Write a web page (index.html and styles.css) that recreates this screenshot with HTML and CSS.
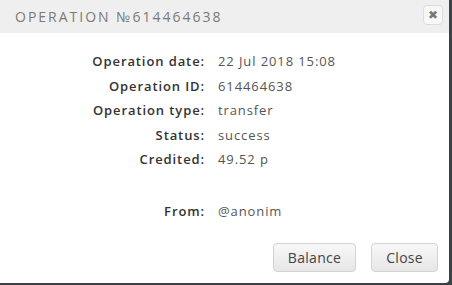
FILE: index.html
```html
<!DOCTYPE html>
<html lang="en">
<head>
    <meta charset="UTF-8">
    <title>Operation</title>
    <link rel="stylesheet" href="styles.css">
</head>
<body>
    <div class="modal">
        <div class="modal-header">
            <h3 class="modal-title">Operation №614464638</h3>
            <button class="close-x">&#10006;</button>
        </div>
        <div class="modal-body">
            <dl class="details">
                <dt>Operation date:</dt><dd>22 Jul 2018 15:08</dd>
                <dt>Operation ID:</dt><dd>614464638</dd>
                <dt>Operation type:</dt><dd>transfer</dd>
                <dt>Status:</dt><dd>success</dd>
                <dt>Credited:</dt><dd>49.52 р</dd>
                <dt class="gap">From:</dt><dd class="gap">@anonim</dd>
            </dl>
        </div>
        <div class="modal-footer">
            <button class="btn">Balance</button>
            <button class="btn">Close</button>
        </div>
    </div>
</body>
</html>
```

FILE: styles.css
```css
body {
    margin: 0;
    background: #3a4244;
    font-family: 'Open Sans', sans-serif;
}

.modal {
    width: 449px;
    height: 283px;
    background: #fff;
    border-bottom-right-radius: 4px;
    display: flex;
    flex-direction: column;
}

.modal-header {
    height: 33px;
    background: #efefef;
    display: flex;
    align-items: center;
    justify-content: space-between;
    padding: 0 6px 0 15px;
}

.modal-title {
    margin: 0;
    font-size: 14px;
    font-weight: normal;
    text-transform: uppercase;
    letter-spacing: 2px;
    color: #7a7a7a;
}

.close-x {
    width: 20px;
    height: 20px;
    padding: 0;
    border: 1px solid #dcdcdc;
    border-radius: 4px;
    background: #f7f7f7;
    color: #777;
    font-family: 'DejaVu Sans', sans-serif;
    font-size: 12px;
    line-height: 18px;
    margin-top: -3px;
}

.modal-body {
    flex: 1;
    padding-top: 16px;
}

.details {
    margin: 0;
    display: grid;
    grid-template-columns: 204px 1fr;
    column-gap: 14px;
    font-size: 13px;
    line-height: 24.6px;
    letter-spacing: 0.9px;
}

.details dt {
    text-align: right;
    font-weight: 600;
    color: #333;
    margin-right: -1px;
}

.details dd {
    margin: 0;
    color: #555;
}

.details .gap {
    margin-top: 27px;
}

.modal-footer {
    display: flex;
    justify-content: flex-end;
    gap: 15px;
    padding: 0 11px 11px 0;
}

.btn {
    height: 29px;
    padding: 0 14px;
    font-family: 'Open Sans', sans-serif;
    font-size: 14px;
    letter-spacing: 0.3px;
    color: #444;
    border: 1px solid #d3d3d3;
    border-radius: 4px;
    background: linear-gradient(#f8f8f8, #e6e6e6);
}
```
